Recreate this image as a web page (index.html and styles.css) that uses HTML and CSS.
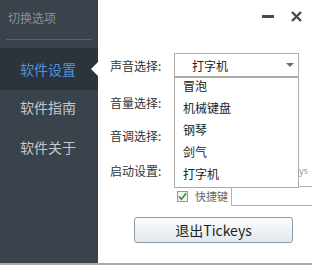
FILE: index.html
```html
<!DOCTYPE html>
<html>
<head>
<meta charset="utf-8">
<link rel="stylesheet" href="styles.css">
</head>
<body>
<div class="window">
  <aside class="sidebar">
    <div class="side-title">切换选项</div>
    <div class="side-sep"></div>
    <div class="side-item active">软件设置<span class="notch"></span></div>
    <div class="side-item">软件指南</div>
    <div class="side-item">软件关于</div>
  </aside>
  <main class="main">
    <div class="titlebar">
      <span class="btn-min"></span>
      <svg class="btn-close" width="11" height="11" viewBox="0 0 11 11"><path d="M1 1L10 10M10 1L1 10" stroke="#4a4a4a" stroke-width="2.4"/></svg>
    </div>
    <div class="row row1">
      <span class="label">声音选择:</span>
      <div class="select"><span class="sel-text">打字机</span><span class="caret"></span></div>
    </div>
    <div class="row row2"><span class="label">音量选择:</span></div>
    <div class="row row3"><span class="label">音调选择:</span></div>
    <div class="row row4"><span class="label">启动设置:</span><span class="spacer"></span><span class="tail">ys</span></div>
    <div class="row row5">
      <span class="check"><svg width="10" height="9" viewBox="0 0 10 9"><path d="M1 4.5L3.8 7.5L9 1" fill="none" stroke="#3f9a3a" stroke-width="2"/></svg></span>
      <span class="check-label">快捷键</span>
      <span class="hotkey"></span>
    </div>
    <div class="row row6"><button class="exit">退出Tickeys</button></div>
    <ul class="dropdown">
      <li>冒泡</li>
      <li>机械键盘</li>
      <li>钢琴</li>
      <li>剑气</li>
      <li>打字机</li>
    </ul>
  </main>
</div>
</body>
</html>
```
FILE: styles.css
```css
* { box-sizing: border-box; }
html, body { margin: 0; padding: 0; background: #ffffff; }
body { font-family: "Noto Sans CJK SC", "Noto Sans", sans-serif; width: 312px; height: 265px; overflow: hidden; }
.window { display: flex; height: 265px; border-bottom: 2px solid #a9a9a9; }
.sidebar { width: 98px; background: #3a424b; display: flex; flex-direction: column; }
.side-title { color: #8a9096; font-size: 12px; line-height: 18px; padding: 9px 0 0 8px; height: 39px; }
.side-sep { height: 1px; background: #59616a; margin: 0 6px 0 6px; }
.side-item { position: relative; color: #c4c8cc; font-size: 14px; height: 40px; line-height: 40px; padding-left: 20px; }
.side-item.active { background: #2c333b; color: #4b94da; height: 42px; line-height: 42px; margin-top: 8px; }
.side-item:nth-child(4) { margin-top: -3px; }
.notch { position: absolute; right: 0; top: 14px; width: 0; height: 0; border-top: 7px solid transparent; border-bottom: 7px solid transparent; border-right: 7px solid #ffffff; }
.main { flex: 1; position: relative; display: flex; flex-direction: column; padding-left: 12px; }
.titlebar { height: 32px; display: flex; justify-content: flex-end; align-items: center; padding-right: 10px; gap: 17px; }
.btn-min { width: 12px; height: 3px; background: #4a4a4a; }
.btn-close { display: block; }
.row { display: flex; align-items: center; height: 24px; }
.label { width: 64px; font-size: 12px; color: #333; }
.row1 { margin-top: 21px; }
.row2 { margin-top: 13px; }
.row3 { margin-top: 9px; }
.row4 { margin-top: 11px; }
.select { width: 125px; height: 24px; border: 1px solid #ababab; display: flex; align-items: center; justify-content: space-between; padding: 0 4px 0 17px; }
.sel-text { font-size: 12px; color: #222; }
.caret { width: 0; height: 0; border-left: 4px solid transparent; border-right: 4px solid transparent; border-top: 4px solid #6a6a6a; }
.spacer { flex: 1; }
.tail { font-size: 9px; color: #9a9a9a; padding-right: 4px; }
.row5 { margin-top: 4px; height: 20px; padding-left: 67px; }
.check { width: 11px; height: 11px; border: 1px solid #9a9a9a; background: #f3f3f3; display: flex; align-items: center; justify-content: center; }
.check-label { font-size: 11px; color: #666; margin-left: 7px; }
.hotkey { margin-left: 3px; flex: 1; height: 20px; border: 1px solid #b3b3b3; border-right: none; }
.row6 { margin-top: 11px; height: 26px; padding-left: 24px; }
.exit { width: 159px; height: 26px; border: 1px solid #8d9aa6; border-radius: 3px; background: linear-gradient(#fbfcfd, #e3e8ee); font-family: "Noto Sans CJK SC", sans-serif; font-size: 14px; color: #1e1e1e; padding: 0; }
.dropdown { position: absolute; left: 76px; top: 77px; width: 125px; height: 111px; margin: 0; padding: 0; list-style: none; background: #fff; border: 1px solid #ababab; }
.dropdown li { height: 22px; line-height: 16px; padding-left: 8px; font-size: 12px; color: #222; }
```
